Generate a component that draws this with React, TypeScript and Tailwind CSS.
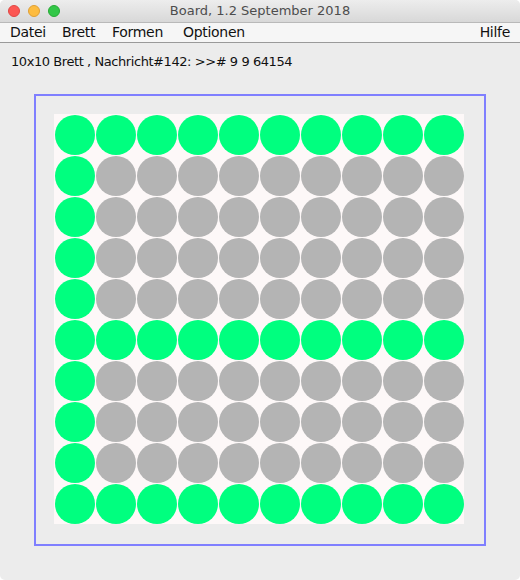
import React from "react";

const greenRows = new Set([0, 5, 9]);

export default function App() {
  const cells: boolean[] = [];
  for (let r = 0; r < 10; r++) {
    for (let c = 0; c < 10; c++) {
      cells.push(greenRows.has(r) || c === 0);
    }
  }
  return (
    <div className="w-[520px] h-[580px] bg-[#ececec] overflow-hidden rounded-[5px] flex flex-col" style={{ fontFamily: '"DejaVu Sans", "Noto Sans", sans-serif' }}>
      <div className="h-[22px] bg-gradient-to-b from-[#ededed] to-[#d8d8d8] flex items-center relative shrink-0">
        <div className="flex items-center gap-[8px] pl-[8px]">
          <div className="w-[12px] h-[12px] rounded-full bg-[#fc5753] border border-[#df4744]" />
          <div className="w-[12px] h-[12px] rounded-full bg-[#fdbc40] border border-[#de9f34]" />
          <div className="w-[12px] h-[12px] rounded-full bg-[#33c748] border border-[#27aa35]" />
        </div>
        <div className="absolute inset-0 flex items-center justify-center text-[13px] text-[#4d4d4d]">
          Board, 1.2 September 2018
        </div>
      </div>
      <div className="h-[21px] bg-[#f6f6f6] border-t border-[#b9b9b9] border-b border-b-[#9a9a9a] flex items-center text-[14px] text-[#111] shrink-0 tracking-[-0.3px]">
        <span className="ml-[10px] w-[52px]">Datei</span>
        <span className="w-[50px]">Brett</span>
        <span className="w-[71px]">Formen</span>
        <span>Optionen</span>
        <span className="ml-auto mr-[10px]">Hilfe</span>
      </div>
      <div className="pl-[11px] pt-[9px] text-[13px] text-[#111] h-[51px] shrink-0 tracking-[-0.43px]">
        10x10 Brett , Nachricht#142: &gt;&gt;# 9 9 64154
      </div>
      <div className="ml-[34px] w-[452px] h-[452px] border-2 border-[#7f7fff] pl-[18px] pt-[18px]">
        <div className="w-[410px] h-[410px] bg-[#fdf8f8] pl-[1px] pt-[1px] grid grid-cols-[repeat(10,40px)] grid-rows-[repeat(10,40px)] gap-[1px]">
          {cells.map((g, i) => (
            <div key={i} className={g ? "w-[40px] h-[40px] rounded-full bg-[#00ff7f]" : "w-[40px] h-[40px] rounded-full bg-[#b4b4b4]"} />
          ))}
        </div>
      </div>
    </div>
  );
}
